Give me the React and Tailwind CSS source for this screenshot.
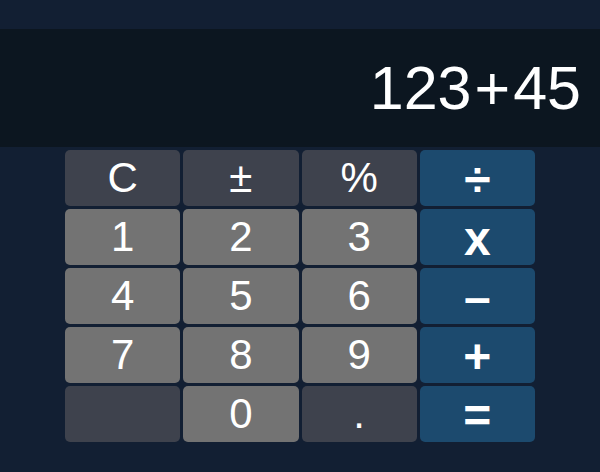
const KEYS = [
  { label: "C", kind: "fn" },
  { label: "±", kind: "fn" },
  { label: "%", kind: "fn" },
  { label: "÷", kind: "op" },
  { label: "1", kind: "num" },
  { label: "2", kind: "num" },
  { label: "3", kind: "num" },
  { label: "x", kind: "op" },
  { label: "4", kind: "num" },
  { label: "5", kind: "num" },
  { label: "6", kind: "num" },
  { label: "–", kind: "op" },
  { label: "7", kind: "num" },
  { label: "8", kind: "num" },
  { label: "9", kind: "num" },
  { label: "+", kind: "op" },
  { label: "", kind: "fn" },
  { label: "0", kind: "num" },
  { label: ".", kind: "fn" },
  { label: "=", kind: "op" },
];

const KIND_BG = {
  fn: "bg-[#3e424d] text-[42px]",
  num: "bg-[#737373] text-[42px]",
  op: "bg-[#1c4a6e] text-[48px] font-bold pt-[4px]",
};

export default function App() {
  return (
    <div
      className="w-[600px] h-[472px] bg-[#121f33] pt-[29px] overflow-hidden"
      style={{ fontFamily: '"Liberation Sans", Arial, sans-serif' }}
    >
      {/* display */}
      <div className="h-[118px] bg-[#0c1620] flex items-center justify-end pr-[19px]">
        <span className="text-white text-[61px] leading-none">
          123<span className="mx-[3px]">+</span>45
        </span>
      </div>

      {/* keypad */}
      <div className="mt-[3px] mx-auto w-[470px] grid grid-cols-4 gap-[3px]">
        {KEYS.map((k, i) => (
          <button
            key={i}
            className={`h-[56px] rounded-[5px] flex items-center justify-center text-white leading-none ${KIND_BG[k.kind]}`}
          >
            {k.label}
          </button>
        ))}
      </div>
    </div>
  );
}
